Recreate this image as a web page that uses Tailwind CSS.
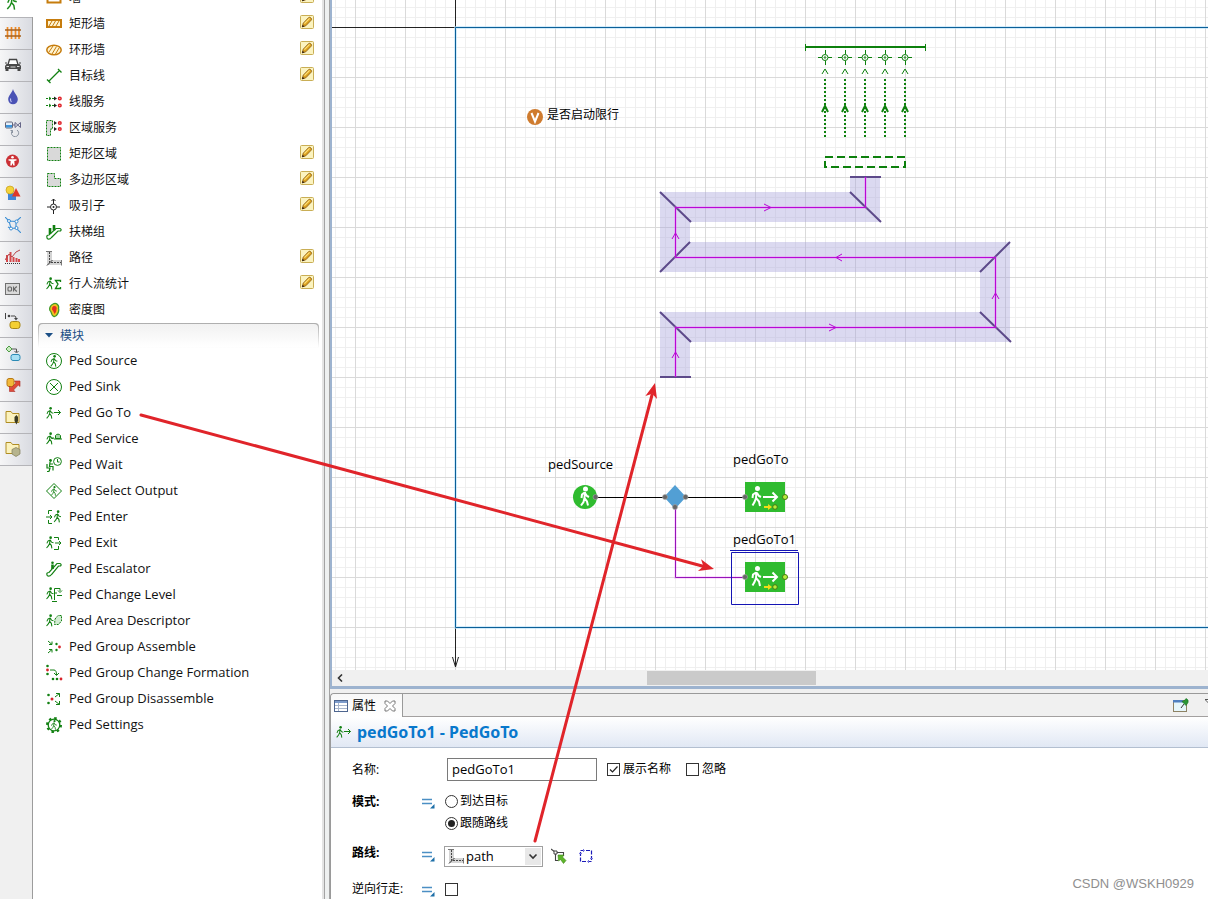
<!DOCTYPE html>
<html lang="zh-CN">
<head>
<meta charset="utf-8">
<title>pedGoTo1 - PedGoTo</title>
<script src="https://cdn.jsdelivr.net/npm/@tailwindcss/browser@4"></script>
</head>
<body class="relative flex h-screen overflow-hidden bg-[#f0f0f0] text-xs text-black font-['Open_Sans','Noto_Sans_CJK_SC',sans-serif]">

<!-- Shared symbols -->
<svg class="hidden">
  <symbol id="man" viewBox="0 0 9 14">
    <circle cx="5.2" cy="1.6" r="1.5" fill="currentColor"/>
    <path d="M4.6 3.6 4 8.2M4.4 4.2 2.2 5.4 1 8M5 4.4 6.2 6.6 8.4 7.2M4 8 2.8 10.6.6 13.2M4.2 8 6 10.2 6.6 13.6" fill="none" stroke="currentColor" stroke-width="1.2"/>
  </symbol>
  <symbol id="pencil" viewBox="0 0 14 14">
    <rect x=".5" y=".5" width="13" height="13" rx="1" fill="#fbf3c0" stroke="#c9ae55"/>
    <path d="M2.3 11.8 3.2 8.2 8.6 2.6Q9.6 1.8 10.8 2.8L11.3 3.3Q12 4.4 11.2 5.2L5.8 10.8Z" fill="#dba21f" stroke="#8a5a14" stroke-width=".8"/>
    <path d="M4.4 8.6 9.6 3.4" stroke="#ffe27a" stroke-width="1.2"/>
    <path d="M2 12.2 2.6 9.8 4.6 11.6Z" fill="#332211"/>
  </symbol>
  <symbol id="pathicon" viewBox="0 0 16 16">
    <path d="M1 1H6V10H15.5V15H1Z" fill="#d4d4d4"/>
    <path d="M0 1.5H6M15.5 10V15.5" stroke="#777"/>
    <path d="M3.5 2V12.5H15" fill="none" stroke="#444" stroke-dasharray="2 1"/>
    <path d="M1 15.5 6.5 10" stroke="#333"/>
  </symbol>
  <symbol id="eq" viewBox="0 0 14 12">
    <path d="M1 2.5H11M1 6.5H11" stroke="#4b8fc4" stroke-width="1.4"/>
    <path d="M13.5 7V11.5H9Z" fill="#1d6fa8"/>
  </symbol>
  <symbol id="goto" viewBox="0 0 16 16">
    <use href="#man" x="0" y="2" width="8" height="12"/>
    <path d="M8 7.5H14.5M12 5 14.5 7.5 12 10" fill="none" stroke="currentColor"/>
  </symbol>
</svg>

<!-- Palette rail -->
<nav class="flex w-[33px] shrink-0 flex-col border-r border-[#9c9c9c] bg-[#f0f0f0] [&>button]:flex [&>button]:h-8 [&>button]:shrink-0 [&>button]:items-center [&>button]:pb-[2px] [&>button]:pl-[5px] [&>button]:border-t [&>button]:border-[#b4b4b8] [&>button]:bg-linear-to-r [&>button]:from-[#f6f6f7] [&>button]:to-[#d9dbe1] [&_svg]:size-4">
  <div class="-mr-px h-[17px] shrink-0 overflow-hidden bg-white pl-[5px] text-[#1a8a1a]"><svg viewBox="0 0 16 16"><use href="#man" x="1" y="-7" width="12" height="17"/></svg></div>
  <button aria-label="Rail"><svg viewBox="0 0 16 16"><path d="M2.5 2V14M6.5 2V14M10.5 2V14M14 2V14" stroke="#f08a24" stroke-width="1.7"/><path d="M0 5H16M0 11H16" stroke="#a5601c" stroke-width="1.4"/></svg></button>
  <button aria-label="Road"><svg viewBox="0 0 16 16"><path d="M3 7.500 4.500 2.500H11.500L13 7.500" fill="#fff" stroke="#444" stroke-width="1.300"/><path d="M1.500 7H14.500L16 9V12H0V9Z" fill="#4a4a4a"/><path d="M.5 12H3.500V14H.5ZM12.500 12H15.500V14H12.500ZM0 5.500H2V6.500H0ZM14 5.500H16V6.500H14Z" fill="#444"/><path d="M1.500 9.500H4M12 9.500H14.500M5.500 10H10.500" stroke="#ddd"/></svg></button>
  <button aria-label="Fluid"><svg viewBox="0 0 16 16"><path d="M8 0C9 4 12.8 6.5 12.8 10.5A4.8 4.8 0 0 1 3.2 10.5C3.2 6.5 7 4 8 0Z" fill="#4a52b5"/><path d="M5.6 9.5Q5 11.500 6.4 13" fill="none" stroke="#c4c8f4" stroke-width="1.2"/></svg></button>
  <button aria-label="System dynamics"><svg viewBox="0 0 16 16"><rect x=".5" y="1" width="7" height="6" rx="1" fill="#e4effa" stroke="#667"/><path d="M1 4H7V6.500H1Z" fill="#3c94dc"/><path d="M7.500 4H10M10 1.500V6.500L15.500 1.500V6.500Z" fill="none" stroke="#668"/><path d="M7.500 9.500A3.600 3.600 0 1 0 12 9M7.500 9.500V12M7.500 9.500H5.500" fill="none" stroke="#8a93a0"/></svg></button>
  <button aria-label="Pedestrian"><svg viewBox="0 0 16 16"><circle cx="7.500" cy="8" r="6.500" fill="#cb3136"/><circle cx="7.500" cy="4.300" r="1.300" fill="#fff"/><path d="M3.500 6.200H11.500V7.500L9.300 8 9.700 12.500H8.300L7.500 10 6.700 12.500H5.300L5.700 8 3.500 7.500Z" fill="#fff"/></svg></button>
  <button aria-label="Presentation"><svg viewBox="0 0 16 16"><rect x="3" y="8" width="8" height="7" fill="#3f86d8"/><circle cx="5" cy="5" r="4" fill="#f3d33b" stroke="#c79d1b" stroke-width=".7"/><path d="M11 3 15.500 11.500H7Z" fill="#e0392a"/></svg></button>
  <button aria-label="Space markup"><svg viewBox="0 0 16 16"><g fill="none" stroke="#3d8fd4" stroke-width="1.100"><path d="M4 4 11 4.500 11 11 6 11.500ZM0 0 4 4M16 0 11 4.500M11 11 16 16M6 11.500 3 10"/></g><g fill="#fff" stroke="#3d8fd4"><circle cx="4" cy="4" r="1.500"/><circle cx="11.500" cy="4.500" r="1.500"/><circle cx="11.500" cy="11" r="1.500"/><circle cx="6" cy="11.500" r="1.500"/></g></svg></button>
  <button aria-label="Analysis"><svg viewBox="0 0 16 16"><path d="M2 6V13M5.500 3V13M8.500 8V13M11.500 9V13M14 10V13" stroke="#d5484b" stroke-width="2"/><path d="M0 11 4 5 7 8 11 3 15 1" fill="none" stroke="#b8474b"/><path d="M0 14.500H16" stroke="#333" stroke-dasharray="1 1"/></svg></button>
  <button aria-label="Controls"><svg viewBox="0 0 16 16"><rect x=".5" y="2.500" width="14" height="11" fill="#d9d9d9" stroke="#707070"/><rect x="3" y="6" width="3.500" height="4" rx="1" fill="none" stroke="#666" stroke-width="1.100"/><path d="M8.500 5.500V10.500M11.800 5.500 9 8 11.800 10.500" fill="none" stroke="#666" stroke-width="1.100"/></svg></button>
  <button aria-label="Connectivity"><svg viewBox="0 0 16 16"><path d="M.5 0V6M3 3H5M6 3H10Q11 3 11 6" fill="none" stroke="#444"/><circle cx="4" cy="3" r="1.300" fill="#444"/><path d="M9 5H13L11 7.500Z" fill="#444"/><rect x="5" y="8.500" width="10" height="7" rx="2.500" fill="#f4cf32" stroke="#a8871a"/></svg></button>
  <button aria-label="Process modeling"><svg viewBox="0 0 16 16"><path d="M4 1 7 4 4 7 1 4Z" fill="#c9ecc0" stroke="#4f9a45"/><path d="M7 4H11.500V7M9.500 6 11.500 8 13.500 6" fill="none" stroke="#555"/><rect x="6" y="9.500" width="9" height="6" rx="2" fill="#a8e0f4" stroke="#2b8ab5"/></svg></button>
  <button aria-label="Material handling"><svg viewBox="0 0 16 16"><rect x="2" y="1.500" width="7" height="8" rx="2" fill="#f2b83a" stroke="#b77a15"/><path d="M15 4V9.500L13.300 8 8.500 13 10 14.500H4.500V9L6.200 10.700 11 6 9.500 4Z" fill="#e04a3a" stroke="#a92a22" stroke-width=".6"/></svg></button>
  <button aria-label="Pictures"><svg viewBox="0 0 16 16"><path d="M1 13.500V2.500H6L7.500 4.500H14V13.500Z" fill="#fbf2bd" stroke="#b08d23"/><path d="M11.500 6 13 8 13 12 11.500 15.500 9.500 12V8Z" fill="#3a3a22"/></svg></button>
  <button aria-label="3D objects"><svg viewBox="0 0 16 16"><path d="M1 12.500V1.500H6L7.500 3.500H14V12.500Z" fill="#fbf2bd" stroke="#b08d23"/><path d="M11 6.500 15 8.500V13L11 15.500 7 13V8.500Z" fill="#b6b48e" stroke="#7f7d59" stroke-width=".7"/></svg></button>
  <div class="h-px shrink-0 bg-[#b4b4b8]"></div>
</nav>

<!-- Palette -->
<aside class="w-[289px] shrink-0 overflow-hidden bg-white text-[#111] [&_li]:h-[26px] [&_li]:pr-2 [&_li]:flex [&_li]:items-center [&_li]:pl-[13px] [&_li>svg]:size-4 [&_li>svg]:shrink-0 [&_li>svg]:mr-[7px] [&_li>span]:grow [&_li>button]:size-[14px] [&_li>button]:shrink-0 [&_li>button]:mb-[4px] [&_li>button>svg]:size-[14px]">
  <ul class="-mt-[15px]">
    <li><svg viewBox="0 0 16 16"><path d="M1.500 4V12.500H14.500V4" fill="none" stroke="#c67c0d" stroke-width="2"/></svg><span>墙</span><button aria-label="绘制墙"><svg><use href="#pencil"/></svg></button></li>
    <li><svg viewBox="0 0 16 16"><rect x="1" y="4" width="14" height="7" fill="#fff3cf" stroke="#c67c0d" stroke-width="2"/><path d="M3 10 6 5M6.500 10 9.500 5M10 10 13 5" stroke="#c67c0d"/></svg><span>矩形墙</span><button aria-label="绘制矩形墙"><svg><use href="#pencil"/></svg></button></li>
    <li><svg viewBox="0 0 16 16"><ellipse cx="8" cy="8" rx="7.200" ry="4.800" fill="#fff3cf" stroke="#c67c0d" stroke-width="1.500"/><path d="M3 10 7 4M6 12 10.500 4.500M9.500 12 13 6" stroke="#c67c0d"/></svg><span>环形墙</span><button aria-label="绘制环形墙"><svg><use href="#pencil"/></svg></button></li>
    <li><svg viewBox="0 0 16 16"><path d="M2.500 13.500 13.500 2.500M1 11.500 4.500 15M12 1 15.500 4.500" stroke="#128012" stroke-width="1.300"/></svg><span>目标线</span><button aria-label="绘制目标线"><svg><use href="#pencil"/></svg></button></li>
    <li><svg viewBox="0 0 16 16"><path d="M0 4.500H8M0 11.500H8" stroke="#128012" stroke-dasharray="2 1"/><path d="M3 3 5 4.500 3 6M3 10 5 11.500 3 13" stroke="#128012" fill="none"/><path d="M8 2.500 11 4.500 8 6.500ZM8 9.500 11 11.500 8 13.500Z" fill="#222"/><g fill="#fff" stroke="#e0242b" stroke-width="1.500"><circle cx="13.800" cy="4.500" r="1.300"/><circle cx="13.800" cy="11.500" r="1.300"/></g></svg><span>线服务</span></li>
    <li><svg viewBox="0 0 16 16"><path d="M.5.500H6.500V9H4.500V15.500H.5Z" fill="#dcdcdc" stroke="#128012" stroke-dasharray="2 1"/><path d="M8 1 11 3 8 5ZM8 7 11 9 8 11Z" fill="#222"/><g fill="#fff" stroke="#e0242b" stroke-width="1.500"><circle cx="13.800" cy="3" r="1.300"/><circle cx="13.800" cy="9" r="1.300"/></g></svg><span>区域服务</span></li>
    <li><svg viewBox="0 0 16 16"><rect x="1.500" y="1.500" width="13" height="13" fill="#d9d9d9" stroke="#128012" stroke-dasharray="2 1"/></svg><span>矩形区域</span><button aria-label="绘制矩形区域"><svg><use href="#pencil"/></svg></button></li>
    <li><svg viewBox="0 0 16 16"><path d="M1.500 1.500H8.500V6.500H14.500V14.500H1.500Z" fill="#d9d9d9" stroke="#128012" stroke-dasharray="2 1"/></svg><span>多边形区域</span><button aria-label="绘制多边形区域"><svg><use href="#pencil"/></svg></button></li>
    <li><svg viewBox="0 0 16 16"><circle cx="7.500" cy="9" r="3" fill="none" stroke="#222"/><circle cx="7.500" cy="9" r="1" fill="#222"/><path d="M1 9H4M11 9H14M7.500 12V16M7.500 6V1M5.500 3 7.500 1 9.500 3" fill="none" stroke="#222"/></svg><span>吸引子</span><button aria-label="绘制吸引子"><svg><use href="#pencil"/></svg></button></li>
    <li><svg viewBox="0 0 16 16"><path d="M.8 12.500Q.8 11 3 11L10 4.500H14Q16 5.500 14.500 7H12L5.500 13.500Q4 15.500 1.800 15 .8 14.500.8 12.500Z" fill="none" stroke="#128012" stroke-width="1.200"/><path d="M4 4V10M8 1V6.500" stroke="#128012" stroke-width="2.600"/></svg><span>扶梯组</span></li>
    <li><svg><use href="#pathicon"/></svg><span>路径</span><button aria-label="绘制路径"><svg><use href="#pencil"/></svg></button></li>
    <li class="[&>svg]:text-[#128012]"><svg viewBox="0 0 16 16"><use href="#man" y="1" width="8" height="13"/><path d="M14.500 6V4.500H9.500L12 8 9.500 12.500H14.500V11" fill="none" stroke="currentColor" stroke-width="1.300"/></svg><span>行人流统计</span><button aria-label="绘制行人流统计"><svg><use href="#pencil"/></svg></button></li>
    <li><svg viewBox="0 0 16 16"><path d="M7 2C10 0 13.500 3 12.500 6.500 13.500 9 11 15 8 14.500 5 14 6 10 4 8.500 3 6 4.500 3 7 2Z" fill="#f2c11c" stroke="#3f9a2a" stroke-width="1.300"/><path d="M7.500 4Q11.500 3.500 10.500 7.500 10.500 10 8.500 12 7.500 9 6 7.500 5.500 5 7.500 4Z" fill="#e3301f"/></svg><span>密度图</span></li>
  </ul>
  <div class="ml-[5px] mr-[3px] h-[25px] rounded-t bg-linear-to-b from-[#adadad] to-white p-px">
    <button class="flex h-full w-full items-center rounded-t bg-linear-to-b from-[#f1f1f1] to-white pl-[6px] text-[#1b4f86]"><svg class="mr-[7px] h-[5px] w-[8px]" viewBox="0 0 8 5"><path d="M0 0H8L4 4.500Z" fill="#1b4f86"/></svg>模块</button>
  </div>
  <ul class="text-[13px] [&>li>svg]:text-[#128012] [&>li>svg]:overflow-visible">
    <li><svg viewBox="0 0 16 16"><circle cx="8" cy="8" r="7.500" fill="none" stroke="currentColor"/><use href="#man" x="4" y="2" width="8" height="12"/></svg><span>Ped Source</span></li>
    <li><svg viewBox="0 0 16 16"><circle cx="8" cy="8" r="7.500" fill="none" stroke="currentColor"/><path d="M4 4 12 12M12 4 4 12" stroke="currentColor"/></svg><span>Ped Sink</span></li>
    <li><svg><use href="#goto"/></svg><span>Ped Go To</span></li>
    <li><svg viewBox="0 0 16 16"><use href="#man" y="1" width="8" height="13"/><path d="M9.500 7.500V4.500A3 3 0 0 1 14.500 4.500V7.500Z" fill="#a9d6a9" stroke="currentColor"/><path d="M8 8H16M5 7H8" stroke="currentColor"/></svg><span>Ped Service</span></li>
    <li><svg viewBox="0 0 16 16"><circle cx="11.500" cy="4.500" r="3.900" fill="none" stroke="currentColor"/><path d="M11.500 2V5H13.500" fill="none" stroke="currentColor"/><circle cx="4.500" cy="3.500" r="1.400" fill="currentColor"/><path d="M4 5 3.500 9.500H7L7 13.500M4 7H7M1 7V11H4L3 14.500M1 14.500H3" fill="none" stroke="currentColor" stroke-width="1.200"/></svg><span>Ped Wait</span></li>
    <li><svg viewBox="0 0 16 16"><path d="M8 .5 15.500 8 8 15.500.5 8Z" fill="none" stroke="currentColor"/><use href="#man" x="4.500" y="3" width="7" height="10"/></svg><span>Ped Select Output</span></li>
    <li><svg viewBox="0 0 16 16"><use href="#man" x="7.500" y="1" width="8" height="13"/><path d="M6 1.500H2.500V5M2.500 11V14.500H6M0 8H6M4 6 6 8 4 10" fill="none" stroke="currentColor"/></svg><span>Ped Enter</span></li>
    <li><svg viewBox="0 0 16 16"><use href="#man" y="1" width="8" height="13"/><path d="M8 2.500H12.500V5M12.500 11V14.500H8M9 8H15M13 6 15 8 13 10" fill="none" stroke="currentColor"/></svg><span>Ped Exit</span></li>
    <li><svg viewBox="0 0 16 16"><path d="M.8 13Q.8 11.500 3 11.500L11 2.500H14Q16 3.500 14.500 5H12.500L5.500 13.500Q4 15.500 1.800 15 .8 14.500.8 13Z" fill="none" stroke="currentColor" stroke-width="1.200"/><circle cx="6.500" cy="1.800" r="1.300" fill="currentColor"/><path d="M6.500 3.500V8" stroke="currentColor" stroke-width="2.600"/></svg><span>Ped Escalator</span></li>
    <li><svg viewBox="0 0 16 16"><use href="#man" width="8" height="13"/><path d="M8.500 13V1.500H14V4M8.500 6H11M12 3.500 14 5.500 16 3.500M11 8.500H16M6 14.500H11" fill="none" stroke="currentColor"/></svg><span>Ped Change Level</span></li>
    <li><svg viewBox="0 0 16 16"><use href="#man" y="1" width="8" height="13"/><path d="M9 6 12 2.500H15.500V8L12.500 11.500H8.500Z" fill="#d3ebd3" stroke="currentColor" stroke-dasharray="2 1"/></svg><span>Ped Area Descriptor</span></li>
    <li><svg viewBox="0 0 16 16"><path d="M2 2 6 5.500M6 2.500V5.500H3M2 14 6 10.500M3 10.500H6V13.500" fill="none" stroke="currentColor"/><circle cx="10.500" cy="5" r="1.200" fill="currentColor"/><circle cx="10.500" cy="11" r="1.200" fill="currentColor"/><circle cx="13.500" cy="8" r="1.400" fill="#d8232a"/></svg><span>Ped Group Assemble</span></li>
    <li><svg viewBox="0 0 16 16"><g fill="currentColor"><circle cx="1.500" cy="1" r="1.300"/><circle cx="1.500" cy="9" r="1.300"/><circle cx="7" cy="14" r="1.300"/><circle cx="11" cy="14" r="1.300"/></g><g fill="#d8232a"><circle cx="1.500" cy="5" r="1.400"/><circle cx="15" cy="14" r="1.400"/></g><path d="M4 5H8Q10.500 5 10.500 10M8 8 10.500 10.500 13 8" fill="none" stroke="currentColor"/></svg><span>Ped Group Change Formation</span></li>
    <li><svg viewBox="0 0 16 16"><g fill="currentColor"><circle cx="2.500" cy="4" r="1.300"/><circle cx="2.500" cy="12" r="1.300"/></g><circle cx="6" cy="8" r="1.500" fill="#d8232a"/><path d="M9 6 13.500 2.500M10 2.500H13.500V6M9 10 13.500 13.500M10 13.500H13.500V10" fill="none" stroke="currentColor"/></svg><span>Ped Group Disassemble</span></li>
    <li><svg viewBox="0 0 16 16"><circle cx="8" cy="8" r="5.800" fill="none" stroke="currentColor" stroke-width="1.300"/><circle cx="8" cy="8" r="7" fill="none" stroke="currentColor" stroke-width="2" stroke-dasharray="2.500 3"/><use href="#man" x="4.500" y="3" width="7" height="10"/></svg><span>Ped Settings</span></li>
  </ul>
</aside>

<!-- Splitter -->
<div class="flex w-2 shrink-0 border-l-2 border-[#e4e4e4]"><div class="grow border-x border-[#a3a3a3] bg-[#eef0f0]"></div></div>

<main class="flex min-w-0 grow flex-col">
  <!-- Editor -->
  <section class="flex min-h-0 grow flex-col border-b-[3px] border-l-2 border-[#9db3cf]">
    <svg class="min-h-0 w-full grow bg-white text-[13px]">
      <defs>
        <pattern id="grid" x="5" y="27" width="50" height="50" patternUnits="userSpaceOnUse">
          <path d="M10.500 0V50M20.500 0V50M30.500 0V50M40.500 0V50M0 10.500H50M0 20.500H50M0 30.500H50M0 40.500H50" stroke="#efefef"/>
          <path d="M.5 0V50M0 .5H50" stroke="#dadada"/>
        </pattern>
        <g id="lane" fill="none" stroke="#0d800d">
          <circle cy="57.500" r="3"/><circle cy="57.500" r=".8"/>
          <path d="M-7 57.500H-3M3 57.500H7M.5 50V54M.5 61V65"/>
          <path d="M-3 74 0 69 3 74"/>
          <path d="M0 79V137" stroke-width="2" stroke-dasharray="2 2"/>
          <path d="M-3 112 0 106 3 112" stroke-width="2"/>
        </g>
        <g id="gotoblock">
          <rect width="40" height="30" fill="#2fbb2f"/>
          <g fill="none" stroke="#fff" stroke-width="2"><circle cx="12.500" cy="6.500" r="1.500" fill="#fff"/><path d="M11.500 10 11 16 14 19.500 15 24M11 16 9.500 20 7.500 23.500M11 10.500 8 12.500 7.500 16M12 11 14 14 16 15M18 15H32M27.500 10.500 32 15 27.500 19.500"/></g>
          <path d="M19 25H24" stroke="#f0dc14" stroke-width="2"/><path d="M23 22 27 25 23 28Z" fill="#f0dc14"/>
          <circle cx="30" cy="25" r="2.300" fill="#b5ee3c" stroke="#4a7a12"/>
          <circle cy="15" r="2.500" fill="#666" stroke="#aaa" stroke-width=".6"/>
          <circle cx="40" cy="15" r="2.500" fill="#b5ee3c" stroke="#4a7a12"/>
        </g>
      </defs>
      <g transform="translate(-332 0)">
        <rect x="332" width="4000" height="2000" fill="url(#grid)"/>
        <path d="M332 27.500H455M455.500 0V27M455.500 628V667M452.500 657 455.500 667 458.500 657" fill="none" stroke="#222"/>
        <path d="M4000 27.500H455.500V627.500H4000" fill="none" stroke="#b5e0f8" stroke-width="3" opacity=".6"/>
        <path d="M4000 27.500H455.500V627.500H4000" fill="none" stroke="#0b5f98"/>

        <path d="M805 47H926" stroke="#0d800d" stroke-width="2"/>
        <path d="M805.500 44V51M925.500 44V51" stroke="#0d800d"/>
        <use href="#lane" x="825"/><use href="#lane" x="845"/><use href="#lane" x="865"/><use href="#lane" x="885"/><use href="#lane" x="905"/>
        <rect x="825" y="157" width="80" height="10" fill="none" stroke="#0d800d" stroke-width="2" stroke-dasharray="8 4"/>

        <path d="M865 177V207H675V257H995V327H675V377" fill="none" stroke="#aaa5db" stroke-opacity=".42" stroke-width="30"/>
        <path d="M850 177H881M660 377H691M660 192 691 222M850 192 881 222M660 272 690 242M980 272 1010 242M980 312 1011 342M660 312 691 342" stroke="#5d4a8a" stroke-width="2"/>
        <path d="M865.500 177V207.500H675.500V257.500H995.500V327.500H675.500V377" fill="none" stroke="#f050ff" stroke-opacity=".25" stroke-width="3"/>
        <path d="M865.500 177V207.500H675.500V257.500H995.500V327.500H675.500V377M764 204 771 207.500 764 211M672 239 675.500 233 679 239M842 254 836 257.500 842 261M992 299 995.500 293 999 299M829 324 836 327.500 829 331M672 358 675.500 352 679 358" fill="none" stroke="#b808d4"/>

        <circle cx="535" cy="117" r="8" fill="#cf7b2e"/>
        <path d="M531.500 113 535 121.500 538.500 113" fill="none" stroke="#fff" stroke-width="2"/>
        <text x="547" y="119" class="text-xs">是否启动限行</text>

        <path d="M595 497.500H665M686 497.500H745" stroke="#000"/>
        <circle cx="585" cy="497" r="12" fill="#2fbb2f"/>
        <g fill="none" stroke="#fff" stroke-width="2"><circle cx="585.500" cy="489" r="1.500" fill="#fff"/><path d="M585 492 584.500 498 587 501.500 588 505.500M584.500 498 583.500 502 581 505.500M584.500 492.500 582 494.500 581.500 498M585 493 587 496 589 497"/></g>
        <circle cx="595.500" cy="497" r="2.500" fill="#666" stroke="#aaa" stroke-width=".6"/>
        <path d="M675.500 507V577.500H745" fill="none" stroke="#f050ff" stroke-opacity=".2" stroke-width="3"/>
        <path d="M675.500 507V577.500H745" fill="none" stroke="#9414b8"/>
        <path d="M675 485 686 497 675 509 664 497Z" fill="#529fd4"/>
        <g fill="#666" stroke="#aaa" stroke-width=".6"><circle cx="665" cy="497" r="2.500"/><circle cx="685.500" cy="497" r="2.500"/><circle cx="675" cy="507" r="2.500"/></g>
        <text x="548" y="469">pedSource</text>
        <text x="733" y="464">pedGoTo</text>
        <text x="733" y="544">pedGoTo1</text>
        <use href="#gotoblock" x="745" y="482"/>
        <use href="#gotoblock" x="745" y="562"/>
        <path d="M730 550.500H798M731.500 552.500H798.500V604.500H731.500Z" fill="none" stroke="#1414b4"/>
      </g>
    </svg>
    <div class="flex h-4 shrink-0 items-center bg-[#f0f0f0]">
      <button aria-label="向左滚动" class="w-[17px] pl-[5px]"><svg class="h-[8px] w-[6px]" viewBox="0 0 6 8"><path d="M5 .5 1.500 4 5 7.500" fill="none" stroke="#333" stroke-width="1.600"/></svg></button>
      <div class="flex h-full grow items-center"><div class="ml-[298px] h-[14px] w-[169px] bg-[#cacaca]"></div></div>
    </div>
  </section>

  <!-- Properties -->
  <section class="mt-1 flex h-[206px] shrink-0 flex-col rounded-tl border-l border-t border-[#9a9a9a]">
    <div class="flex h-[23px] shrink-0 border-b border-[#a3a0a0]">
      <div class="-mb-px flex w-[72px] items-center rounded-tl border-r border-[#9a9a9a] bg-linear-to-b from-[#f8f8f8] to-white pl-[3px]">
        <svg class="mr-1 size-[14px]" viewBox="0 0 14 14"><rect x=".5" y="1.500" width="13" height="11" fill="#fff" stroke="#4d658f"/><path d="M1 2H13V4H1Z" fill="#7e9ccb"/><path d="M1 6.500H13M1 9.500H13M4.500 4V12" stroke="#a9b6cc"/></svg>
        <span>属性</span>
        <button aria-label="关闭" class="ml-2"><svg class="size-3" viewBox="0 0 12 12"><path d="M1 1H3.500L6 3.500 8.500 1H11V3.500L8.500 6 11 8.500V11H8.500L6 8.500 3.500 11H1V8.500L3.500 6 1 3.500Z" fill="#fff" stroke="#777"/></svg></button>
      </div>
      <div class="flex grow items-center justify-end">
        <button aria-label="固定"><svg class="mr-4 h-[14px] w-4" viewBox="0 0 16 14"><rect x=".5" y="2.500" width="13" height="11" fill="#e6f6fb" stroke="#8e8264"/><path d="M0 2H10V4.500H0Z" fill="#4f7fc0"/><path d="M8 10 11 6" stroke="#333"/><path d="M9 3.500 13 7.500 15 4.500Q16 1.500 13 .5L11.500 2.500Z" fill="#2b9636" stroke="#14701f" stroke-width=".6"/></svg></button>
        <button aria-label="菜单" class="-mr-1 mb-2"><svg class="h-1 w-[7px]" viewBox="0 0 7 4"><path d="M0 .5H7L3.500 4Z" fill="#fff" stroke="#555"/></svg></button>
      </div>
    </div>
    <div class="flex min-h-0 grow flex-col bg-white">
      <h1 class="flex h-[31px] shrink-0 items-center border-b border-[#b3bfd0] bg-linear-to-b from-white to-[#e1e8f4] pl-[5px] font-['Noto_Sans',sans-serif] text-base font-bold text-[#0878cc]"><svg class="mr-[5px] size-4 text-[#128012]"><use href="#goto"/></svg>pedGoTo1 - PedGoTo</h1>
      <form class="grid shrink-0 grid-cols-[69px_24px_1fr] items-center pl-[21px] pt-[5px]">
        <label for="name" class="h-8 leading-[34px]">名称:</label><span></span>
        <div class="flex h-8 items-center">
          <input id="name" value="pedGoTo1" class="ml-[2px] h-[23px] w-[150px] border border-[#7a7a7a] bg-white px-1 text-[13px]">
          <span class="relative ml-[10px] size-[13px]"><input id="show" type="checkbox" checked class="block size-[13px] appearance-none border border-[#333] bg-white"><svg class="pointer-events-none absolute inset-0" viewBox="0 0 13 13"><path d="M3 6.500 5.500 9 10.500 3.500" fill="none" stroke="#222" stroke-width="1.200"/></svg></span>
          <label for="show" class="ml-[3px]">展示名称</label>
          <input id="ignore" type="checkbox" class="ml-[15px] size-[13px] appearance-none border border-[#333] bg-white">
          <label for="ignore" class="ml-[3px]">忽略</label>
        </div>

        <span class="h-8 font-bold leading-[34px]">模式:</span><svg class="mt-1 h-3 w-[14px]"><use href="#eq"/></svg>
        <div class="flex h-8 items-center"><input id="m1" name="mode" type="radio" class="size-[13px] appearance-none rounded-full border border-[#333] bg-white"><label for="m1" class="ml-[2px]">到达目标</label></div>

        <span></span><span></span>
        <div class="flex h-3 items-center"><input id="m2" name="mode" type="radio" checked class="size-[13px] appearance-none rounded-full border border-[#333] bg-[#222] bg-clip-content p-[2px]"><label for="m2" class="ml-[2px]">跟随路线</label></div>

        <label for="route" class="mb-1 mt-2 h-8 font-bold leading-8">路线:</label><svg class="mt-[10px] h-3 w-[14px]"><use href="#eq"/></svg>
        <div class="mb-px mt-[11px] flex h-8 items-center">
          <div class="relative -ml-px">
            <select id="route" class="block h-[21px] w-[99px] appearance-none border border-[#a0a0a0] bg-white pl-[21px] text-[13px] leading-[18px]"><option>path</option></select>
            <svg class="pointer-events-none absolute left-1 top-[2px] size-4"><use href="#pathicon"/></svg>
            <svg class="pointer-events-none absolute right-[2px] top-[2px] h-[17px] w-4 bg-[#e8e8e8]" viewBox="0 0 16 17"><path d="M4.500 6.500 8 10 11.500 6.500" fill="none" stroke="#333" stroke-width="1.600"/></svg>
          </div>
          <button type="button" aria-label="选择" class="ml-2"><svg class="size-4" viewBox="0 0 16 16"><path d="M0 1 4 4M4.500 4.500H12.500V8M4.500 4.500V12.500H7" fill="none" stroke="#444" stroke-width="1.100"/><path d="M3 3H6V6H3Z" fill="#fff" stroke="#444"/><path d="M7 7H13L11.500 9 15 12.500 12.500 15.500 9.500 11.500 7.500 13Z" fill="#5db52a" stroke="#3c8417" stroke-width=".6"/></svg></button>
          <button type="button" aria-label="显示" class="ml-3"><svg class="size-[14px]" viewBox="0 0 14 14"><rect x="1.500" y="1.500" width="11" height="11" fill="none" stroke="#1c1cb8" stroke-width="1.200" stroke-dasharray="4 1.500"/><path d="M0 4.500H3M4.500 0V3M11 9.500H14M9.500 11V14" stroke="#7a7ae0"/></svg></button>
        </div>

        <label for="rev" class="h-8 leading-8">逆向行走:</label><svg class="mt-1 h-3 w-[14px]"><use href="#eq"/></svg>
        <div class="flex h-8 items-center"><input id="rev" type="checkbox" class="mt-px size-[13px] appearance-none border border-[#333] bg-white"></div>
      </form>
    </div>
  </section>
</main>

<!-- Annotation arrows -->
<svg class="pointer-events-none absolute inset-0 h-full w-full" stroke-linecap="round">
  <g fill="#e0242a" stroke="#e0242a" stroke-width="3">
    <path d="M141 415 704 566.500M535 841 652 395"/>
    <path d="M0 0-15-6-11 0-15 6Z" stroke="none" transform="translate(714 569) rotate(15)"/>
    <path d="M0 0-15-6-11 0-15 6Z" stroke="none" transform="translate(655 383) rotate(-75.300)"/>
  </g>
</svg>
<p class="pointer-events-none absolute bottom-[6px] right-[14px] text-[13px] leading-[18px] text-[#8f8f8f] font-['Liberation_Sans',sans-serif]">CSDN @WSKH0929</p>
</body>
</html>
